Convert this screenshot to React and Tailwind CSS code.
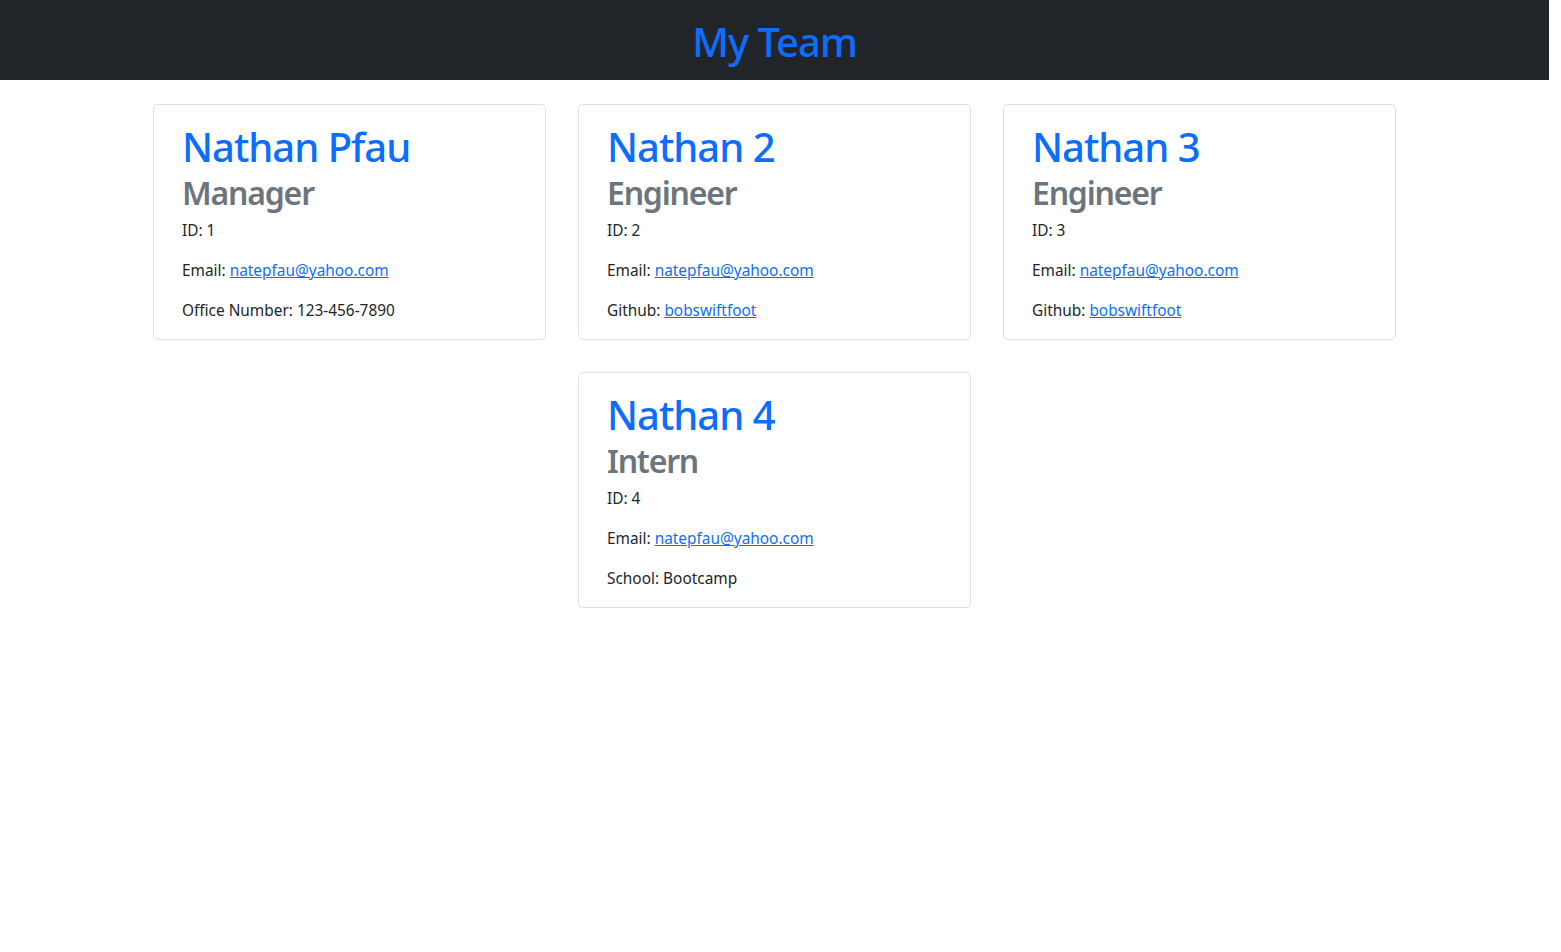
const team = [
  { name: "Nathan Pfau", role: "Manager", id: 1, extra: { label: "Office Number", value: "123-456-7890" } },
  { name: "Nathan 2", role: "Engineer", id: 2, extra: { label: "Github", value: "bobswiftfoot", link: true } },
  { name: "Nathan 3", role: "Engineer", id: 3, extra: { label: "Github", value: "bobswiftfoot", link: true } },
  { name: "Nathan 4", role: "Intern", id: 4, extra: { label: "School", value: "Bootcamp" } },
];

const Card = ({ member }) => {
  return (
    <div className="w-[393px] border border-[#dfdfdf] rounded-[5px] bg-white pl-[28px] pr-4 pt-[18px]">
      <h1 className="text-[40px] leading-[48px] font-medium tracking-[-1px] text-[#0d6efd]">{member.name}</h1>
      <h2 className="text-[32px] leading-[38px] font-semibold tracking-[-1.2px] text-[#6c757d] mt-[3px] mb-[7px]">
        {member.role}
      </h2>
      <p className="text-[15.4px] leading-6 mb-4">ID: {member.id}</p>
      <p className="text-[15.4px] leading-6 mb-4">
        Email: <a href="#" className="text-[#0d6efd] underline">natepfau@yahoo.com</a>
      </p>
      <p className="text-[15.4px] leading-6 mb-4">
        {member.extra.label}:{" "}
        {member.extra.link ? (
          <a href="#" className="text-[#0d6efd] underline">{member.extra.value}</a>
        ) : (
          member.extra.value
        )}
      </p>
    </div>
  );
};

export default function App() {
  return (
    <div className="min-h-[952px] w-[1549px] bg-white text-[#212529] font-['Noto_Sans',sans-serif]">
      <header className="h-20 bg-[#212529] flex items-center justify-center">
        <h1 className="text-[40px] leading-[48px] font-medium tracking-[-1px] text-[#0d6efd] mt-1">My Team</h1>
      </header>
      <div className="flex flex-wrap justify-center gap-x-8 gap-y-8 pt-6 px-[153px]">
        {team.map((m) => (
          <Card key={m.id} member={m} />
        ))}
      </div>
    </div>
  );
}
